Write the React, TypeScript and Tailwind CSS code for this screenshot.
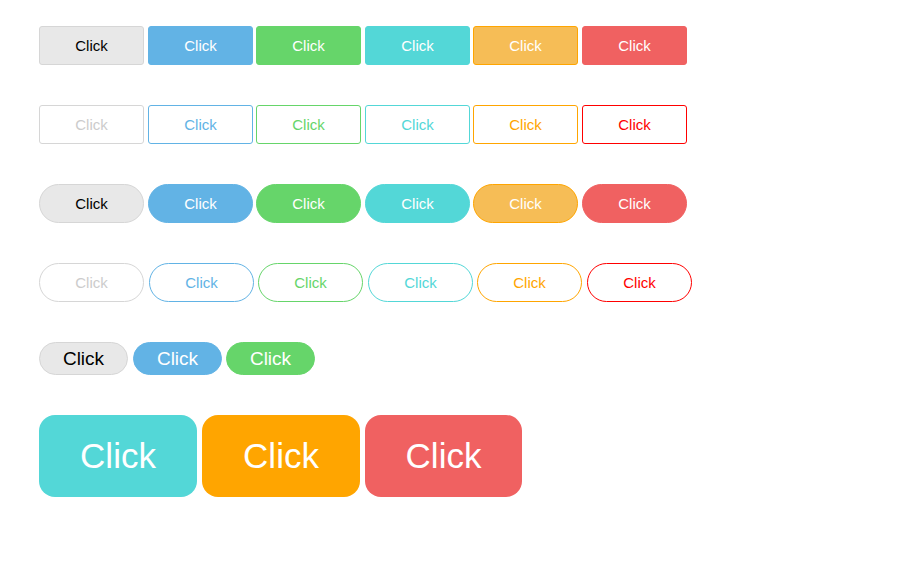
const FILLED = [
  "bg-[#e8e8e8] border-[#d6d6d6] text-black",
  "bg-[#62b3e5] border-[#62b3e5] text-white",
  "bg-[#66d56a] border-[#66d56a] text-white",
  "bg-[#53d7d7] border-[#53d7d7] text-white",
  "bg-[#f6bd56] border-[#ffa500] text-white",
  "bg-[#f06161] border-[#f06161] text-white",
];

const OUTLINE = [
  "bg-white border-[#d6d6d6] text-[#cccccc]",
  "bg-white border-[#62b3e5] text-[#62b3e5]",
  "bg-white border-[#66d56a] text-[#66d56a]",
  "bg-white border-[#53d7d7] text-[#53d7d7]",
  "bg-white border-[#ffa500] text-[#ffa500]",
  "bg-white border-[#ff0000] text-[#ff0000]",
];

const GAP_A = ["", "ml-[4px]", "ml-[3px]", "ml-[4px]", "ml-[3px]", "ml-[4px]"];
const GAP_B = ["", "ml-[5px]", "ml-[4px]", "ml-[5px]", "ml-[4px]", "ml-[5px]"];

function Row({
  styles,
  shape,
  gaps,
}: {
  styles: string[];
  shape: string;
  gaps: string[];
}) {
  return (
    <div className="flex">
      {styles.map((s, i) => (
        <button
          key={i}
          className={`flex items-center justify-center border pt-[2px] ${gaps[i]} ${shape} ${s}`}
        >
          Click
        </button>
      ))}
    </div>
  );
}

export default function App() {
  return (
    <div
      className="min-h-[585px] bg-white pl-[39px] pt-[26px] flex flex-col gap-[40px]"
      style={{ fontFamily: '"Liberation Sans", Arial, sans-serif' }}
    >
      <Row styles={FILLED} shape="w-[105px] h-[39px] rounded-[3px] text-[15px]" gaps={GAP_A} />
      <Row styles={OUTLINE} shape="w-[105px] h-[39px] rounded-[3px] text-[15px]" gaps={GAP_A} />
      <Row styles={FILLED} shape="w-[105px] h-[39px] rounded-full text-[15px]" gaps={GAP_A} />
      <Row styles={OUTLINE} shape="w-[105px] h-[39px] rounded-full text-[15px]" gaps={GAP_B} />
      <Row
        styles={FILLED.slice(0, 3)}
        shape="w-[89px] h-[33px] rounded-full text-[19px]"
        gaps={["", "ml-[5px]", "ml-[4px]"]}
      />
      <div className="flex gap-[5px]">
        <button className="flex items-center justify-center w-[158px] h-[82px] rounded-[16px] bg-[#53d7d7] text-white text-[35px]">
          Click
        </button>
        <button className="flex items-center justify-center w-[158px] h-[82px] rounded-[16px] bg-[#ffa500] text-white text-[35px]">
          Click
        </button>
        <button className="flex items-center justify-center w-[157px] h-[82px] rounded-[16px] bg-[#f06161] text-white text-[35px]">
          Click
        </button>
      </div>
    </div>
  );
}
